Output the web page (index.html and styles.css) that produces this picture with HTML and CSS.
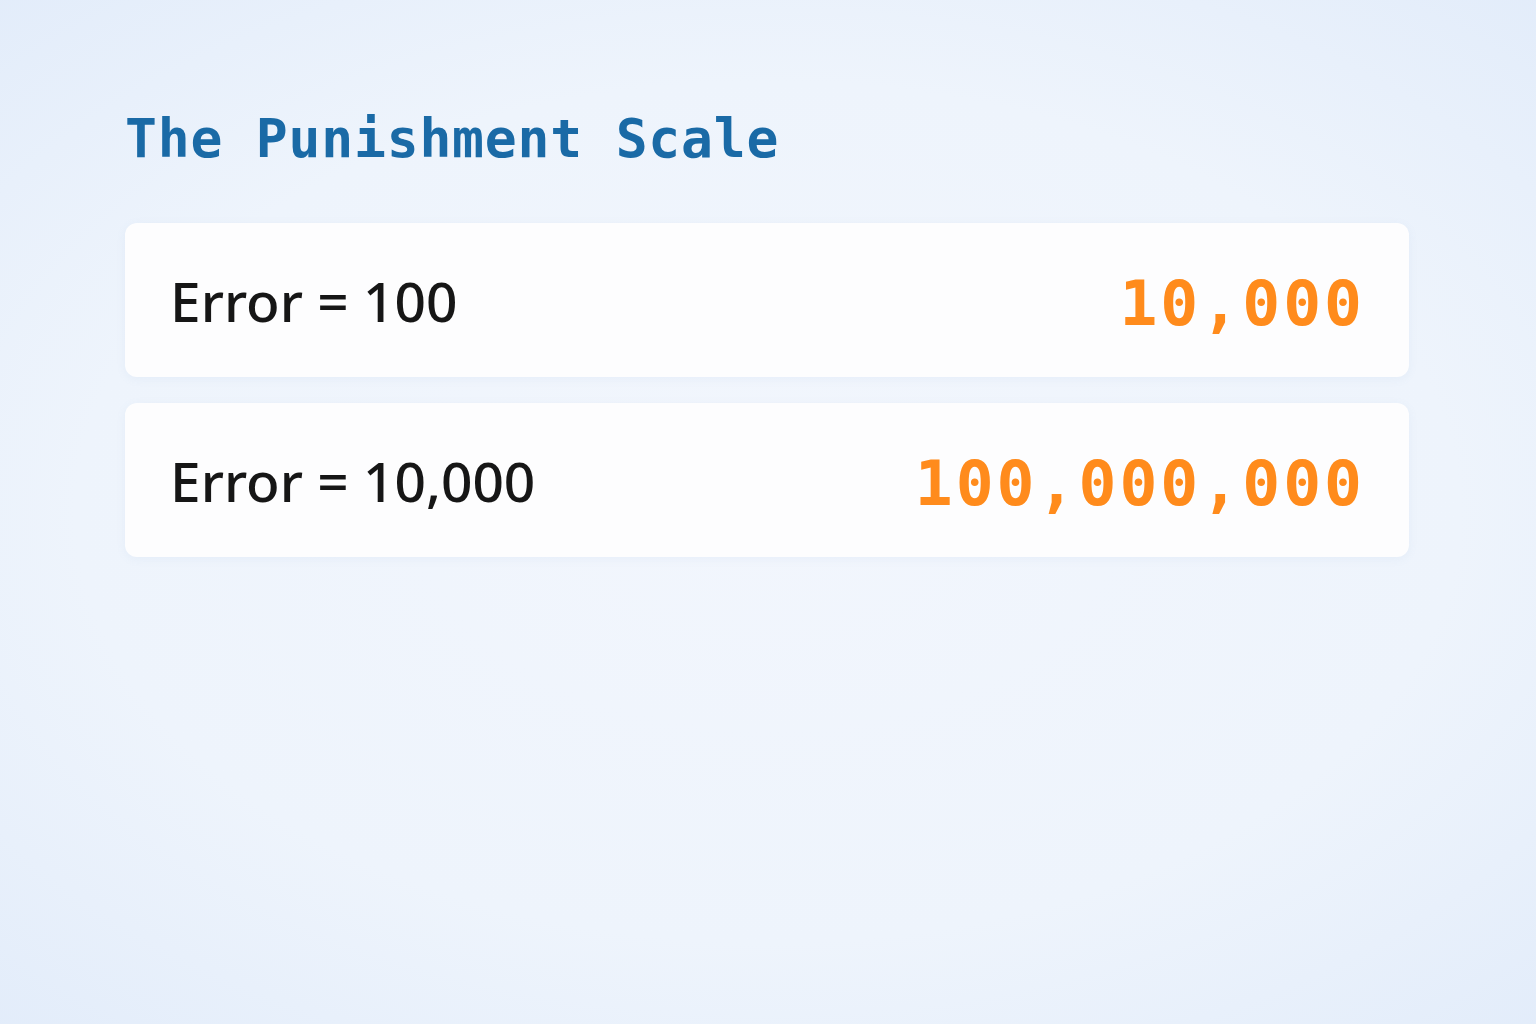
FILE: index.html
```html
<!DOCTYPE html>
<html lang="en">
<head>
<meta charset="utf-8">
<title>The Punishment Scale</title>
<link rel="stylesheet" href="styles.css">
</head>
<body>
<main class="page">
  <h1 class="title">The Punishment Scale</h1>
  <section class="rows">
    <div class="row">
      <span class="label">Error = 100</span>
      <span class="value">10,000</span>
    </div>
    <div class="row">
      <span class="label">Error = 10,000</span>
      <span class="value">100,000,000</span>
    </div>
  </section>
</main>
</body>
</html>
```

FILE: styles.css
```css
html, body {
  margin: 0;
  padding: 0;
  height: 100%;
}
body {
  background: radial-gradient(ellipse 75% 70% at 50% 50%, #f2f6fd 0%, #eef4fc 60%, #e2ecfa 100%);
  font-family: "Noto Sans", "Open Sans", sans-serif;
}
.page {
  padding: 108px 127px 0 125px;
}
.title {
  margin: 0;
  font-family: "DejaVu Sans Mono", monospace;
  font-weight: bold;
  font-size: 53px;
  letter-spacing: 0.8px;
  line-height: 62px;
  color: #1a6aa6;
}
.rows {
  margin-top: 53px;
  display: flex;
  flex-direction: column;
  gap: 26px;
}
.row {
  height: 154px;
  box-sizing: border-box;
  display: flex;
  align-items: center;
  justify-content: space-between;
  padding: 0 47px 0 45px;
  background: #fdfdfe;
  border-radius: 12px;
  box-shadow: 0 2px 10px rgba(120, 150, 200, 0.08);
}
.label {
  font-size: 55px;
  font-weight: 500;
  color: #161616;
}
.value {
  font-family: "DejaVu Sans Mono", monospace;
  font-weight: bold;
  font-size: 63px;
  letter-spacing: 3px;
  margin-right: -3px;
  padding-top: 6px;
  color: #ff8b1c;
}
```
